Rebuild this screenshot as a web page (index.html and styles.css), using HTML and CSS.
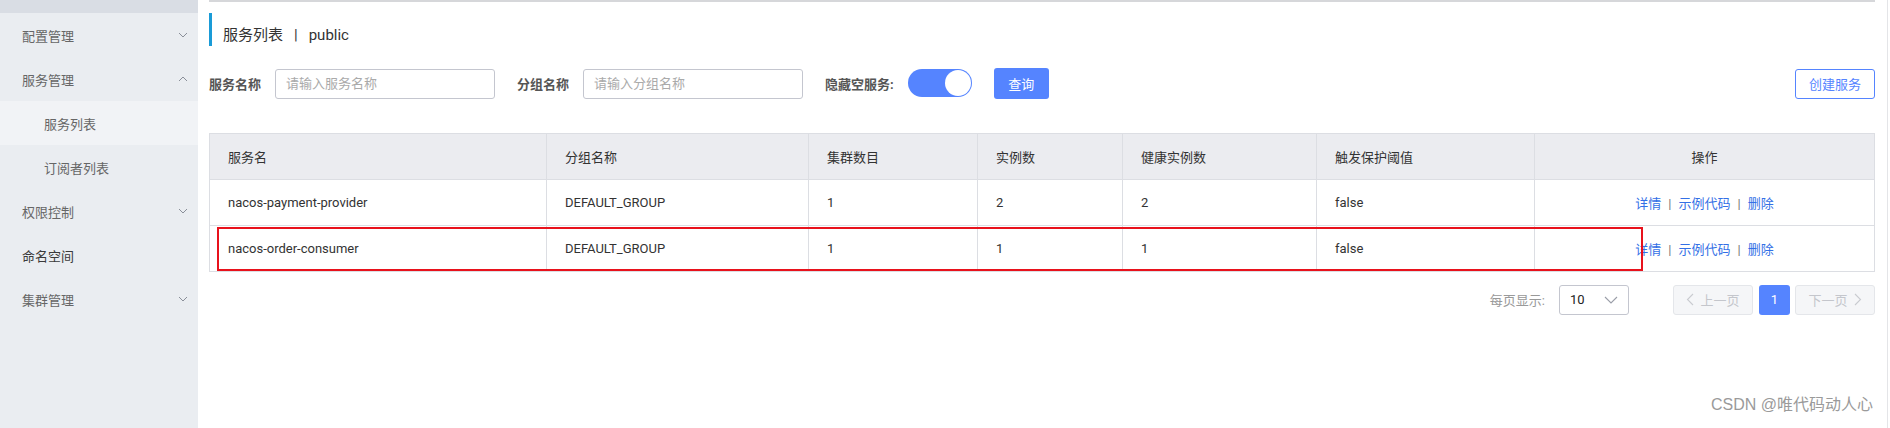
FILE: index.html
```html
<!DOCTYPE html>
<html lang="zh">
<head>
<meta charset="utf-8">
<title>服务列表</title>
<link rel="stylesheet" href="styles.css">
</head>
<body>
<div class="app">
  <aside class="sidebar">
    <div class="side-top"></div>
    <div class="nav-item"><span>配置管理</span><svg class="chev" width="10" height="6" viewBox="0 0 10 6"><path d="M1 1l4 4 4-4" fill="none" stroke="#8a8f99" stroke-width="1"/></svg></div>
    <div class="nav-item"><span>服务管理</span><svg class="chev" width="10" height="6" viewBox="0 0 10 6"><path d="M1 5l4-4 4 4" fill="none" stroke="#8a8f99" stroke-width="1"/></svg></div>
    <div class="nav-item sub active"><span>服务列表</span></div>
    <div class="nav-item sub"><span>订阅者列表</span></div>
    <div class="nav-item"><span>权限控制</span><svg class="chev" width="10" height="6" viewBox="0 0 10 6"><path d="M1 1l4 4 4-4" fill="none" stroke="#8a8f99" stroke-width="1"/></svg></div>
    <div class="nav-item dark"><span>命名空间</span></div>
    <div class="nav-item"><span>集群管理</span><svg class="chev" width="10" height="6" viewBox="0 0 10 6"><path d="M1 1l4 4 4-4" fill="none" stroke="#8a8f99" stroke-width="1"/></svg></div>
  </aside>

  <main class="main">
    <div class="content">
      <div class="title"><span>服务列表</span><span class="title-sep">|</span><span>public</span></div>

      <div class="search-row">
        <label class="label">服务名称</label>
        <input class="input" type="text" placeholder="请输入服务名称">
        <label class="label gap">分组名称</label>
        <input class="input" type="text" placeholder="请输入分组名称">
        <label class="label gap">隐藏空服务:</label>
        <div class="switch"><div class="knob"></div></div>
        <button class="btn-primary">查询</button>
        <div class="spacer"></div>
        <button class="btn-outline">创建服务</button>
      </div>

      <div class="table-wrap">
        <table class="table">
          <colgroup>
            <col class="c1"><col class="c2"><col class="c3"><col class="c4"><col class="c5"><col class="c6"><col class="c7">
          </colgroup>
          <thead>
            <tr>
              <th>服务名</th><th>分组名称</th><th>集群数目</th><th>实例数</th><th>健康实例数</th><th>触发保护阈值</th><th class="center">操作</th>
            </tr>
          </thead>
          <tbody>
            <tr>
              <td>nacos-payment-provider</td><td>DEFAULT_GROUP</td><td>1</td><td>2</td><td>2</td><td>false</td>
              <td class="center ops"><a>详情</a><span class="sep">|</span><a>示例代码</a><span class="sep">|</span><a>删除</a></td>
            </tr>
            <tr>
              <td>nacos-order-consumer</td><td>DEFAULT_GROUP</td><td>1</td><td>1</td><td>1</td><td>false</td>
              <td class="center ops"><a>详情</a><span class="sep">|</span><a>示例代码</a><span class="sep">|</span><a>删除</a></td>
            </tr>
          </tbody>
        </table>
        <div class="highlight"></div>
      </div>

      <div class="pager">
        <span class="pager-label">每页显示:</span>
        <div class="select"><span>10</span><svg width="14" height="8" viewBox="0 0 14 8"><path d="M1 1l6 6 6-6" fill="none" stroke="#9a9ea8" stroke-width="1.1"/></svg></div>
        <div class="pbtn disabled prev"><svg width="8" height="13" viewBox="0 0 8 13"><path d="M7 1L1.5 6.5 7 12" fill="none" stroke="#c9cbd0" stroke-width="1.1"/></svg><span>上一页</span></div>
        <div class="pbtn current">1</div>
        <div class="pbtn disabled next"><span>下一页</span><svg width="8" height="13" viewBox="0 0 8 13"><path d="M1 1l5.5 5.5L1 12" fill="none" stroke="#c9cbd0" stroke-width="1.1"/></svg></div>
      </div>
    </div>
    <div class="vline"></div>
  </main>
</div>
<div class="watermark">CSDN @唯代码动人心</div>
</body>
</html>
```

FILE: styles.css
```css
* { box-sizing: border-box; }
html, body {
  margin: 0;
  padding: 0;
  width: 1890px;
  height: 428px;
  overflow: hidden;
  background: #fff;
  font-family: Roboto, "Noto Sans CJK SC", sans-serif;
  font-size: 13px;
  color: #333;
}
.app {
  display: flex;
  height: 428px;
}

/* sidebar */
.sidebar {
  width: 198px;
  flex: none;
  background: #eaedf1;
}
.side-top {
  height: 13px;
  background: #d9dde4;
}
.nav-item {
  height: 44px;
  display: flex;
  align-items: center;
  justify-content: space-between;
  padding: 0 10px 0 22px;
  color: #666;
  font-size: 13px;
}
.nav-item.sub { padding-left: 44px; }
.nav-item.active { background: #f1f3f6; }
.nav-item.dark { color: #3a3a3a; }
.chev { display: block; }

/* main */
.main {
  flex: 1;
  display: flex;
  min-width: 0;
}
.content {
  flex: 1;
  padding: 0 12px 0 11px;
  position: relative;
}
.content::before {
  content: "";
  display: block;
  height: 2px;
  background: #d6d7da;
}
.vline {
  width: 2px;
  margin-right: 2px;
  background: #e4e5e8;
}

.title {
  margin-top: 11px;
  height: 33px;
  border-left: 3px solid #1a9bd7;
  padding: 12px 0 0 11px;
  line-height: 20px;
  font-size: 15px;
  font-weight: 400;
  color: #333;
  display: flex;
}
.title-sep {
  margin: 0 11px 0 11px;
}

.search-row {
  margin-top: 22px;
  height: 31px;
  display: flex;
  align-items: center;
}
.label {
  font-weight: bold;
  color: #555;
  font-size: 13px;
  margin-right: 14px;
  white-space: nowrap;
}
.label.gap { margin-left: 22px; }
.input {
  width: 220px;
  height: 30px;
  border: 1px solid #c4c6cf;
  border-radius: 3px;
  padding: 0 10px;
  font-family: inherit;
  font-size: 13px;
  color: #333;
  outline: none;
}
.input::placeholder { color: #aaa; }

.switch {
  width: 64px;
  height: 28px;
  border-radius: 14px;
  background: #5584ff;
  display: flex;
  justify-content: flex-end;
  align-items: center;
  padding: 0 1px;
  margin-top: -2px;
}
.knob {
  width: 26px;
  height: 26px;
  border-radius: 50%;
  background: #fff;
}
.btn-primary {
  margin-left: 22px;
  width: 55px;
  height: 31px;
  border: none;
  border-radius: 3px;
  background: #5584ff;
  color: #fff;
  font-family: inherit;
  font-size: 13px;
  padding: 0;
}
.spacer { flex: 1; }
.btn-outline {
  width: 80px;
  height: 30px;
  border: 1px solid #5584ff;
  border-radius: 3px;
  background: #fff;
  color: #5584ff;
  font-family: inherit;
  font-size: 13px;
  padding: 0;
}

/* table */
.table-wrap {
  margin-top: 34px;
  position: relative;
}
.table {
  width: 1665px;
  border-collapse: collapse;
  table-layout: fixed;
}
.c1 { width: 337px; }
.c2 { width: 262px; }
.c3 { width: 169px; }
.c4 { width: 145px; }
.c5 { width: 194px; }
.c6 { width: 218px; }
.c7 { width: 340px; }
.table th, .table td {
  border: 1px solid #dcdee3;
  height: 46px;
  padding: 0 0 0 18px;
  text-align: left;
  font-weight: normal;
  font-size: 13px;
  color: #333;
  white-space: nowrap;
}
.table th {
  background: #ebecf0;
  color: #333;
}
.table .center { text-align: center; padding-left: 0; }
.ops a { color: #3370e6; }
.sep { color: #777; margin: 0 7px; }

.highlight {
  position: absolute;
  left: 8px;
  top: 94px;
  width: 1426px;
  height: 44px;
  border: 2px solid #e8121c;
  pointer-events: none;
}

/* pager */
.pager {
  margin-top: 12px;
  height: 31px;
  display: flex;
  justify-content: flex-end;
  align-items: center;
}
.pager-label {
  color: #999;
  margin-right: 14px;
}
.select {
  width: 70px;
  height: 30px;
  border: 1px solid #c4c6cf;
  border-radius: 3px;
  display: flex;
  align-items: center;
  justify-content: space-between;
  padding: 0 10px;
  color: #222;
  margin-right: 44px;
}
.pbtn {
  height: 30px;
  border-radius: 3px;
  display: flex;
  align-items: center;
  justify-content: center;
  font-size: 13px;
}
.pbtn.disabled {
  width: 80px;
  background: #f5f6f8;
  border: 1px solid #e4e6ea;
  color: #c4c6cc;
  gap: 6px;
}
.pbtn.current {
  width: 31px;
  margin: 0 5px 0 6px;
  background: #5584ff;
  color: #fff;
}

.watermark {
  position: absolute;
  right: 17px;
  top: 395px;
  line-height: 20px;
  font-family: "Liberation Sans", "Noto Sans CJK SC", sans-serif;
  font-size: 16px;
  color: #9a9a9a;
}
```
